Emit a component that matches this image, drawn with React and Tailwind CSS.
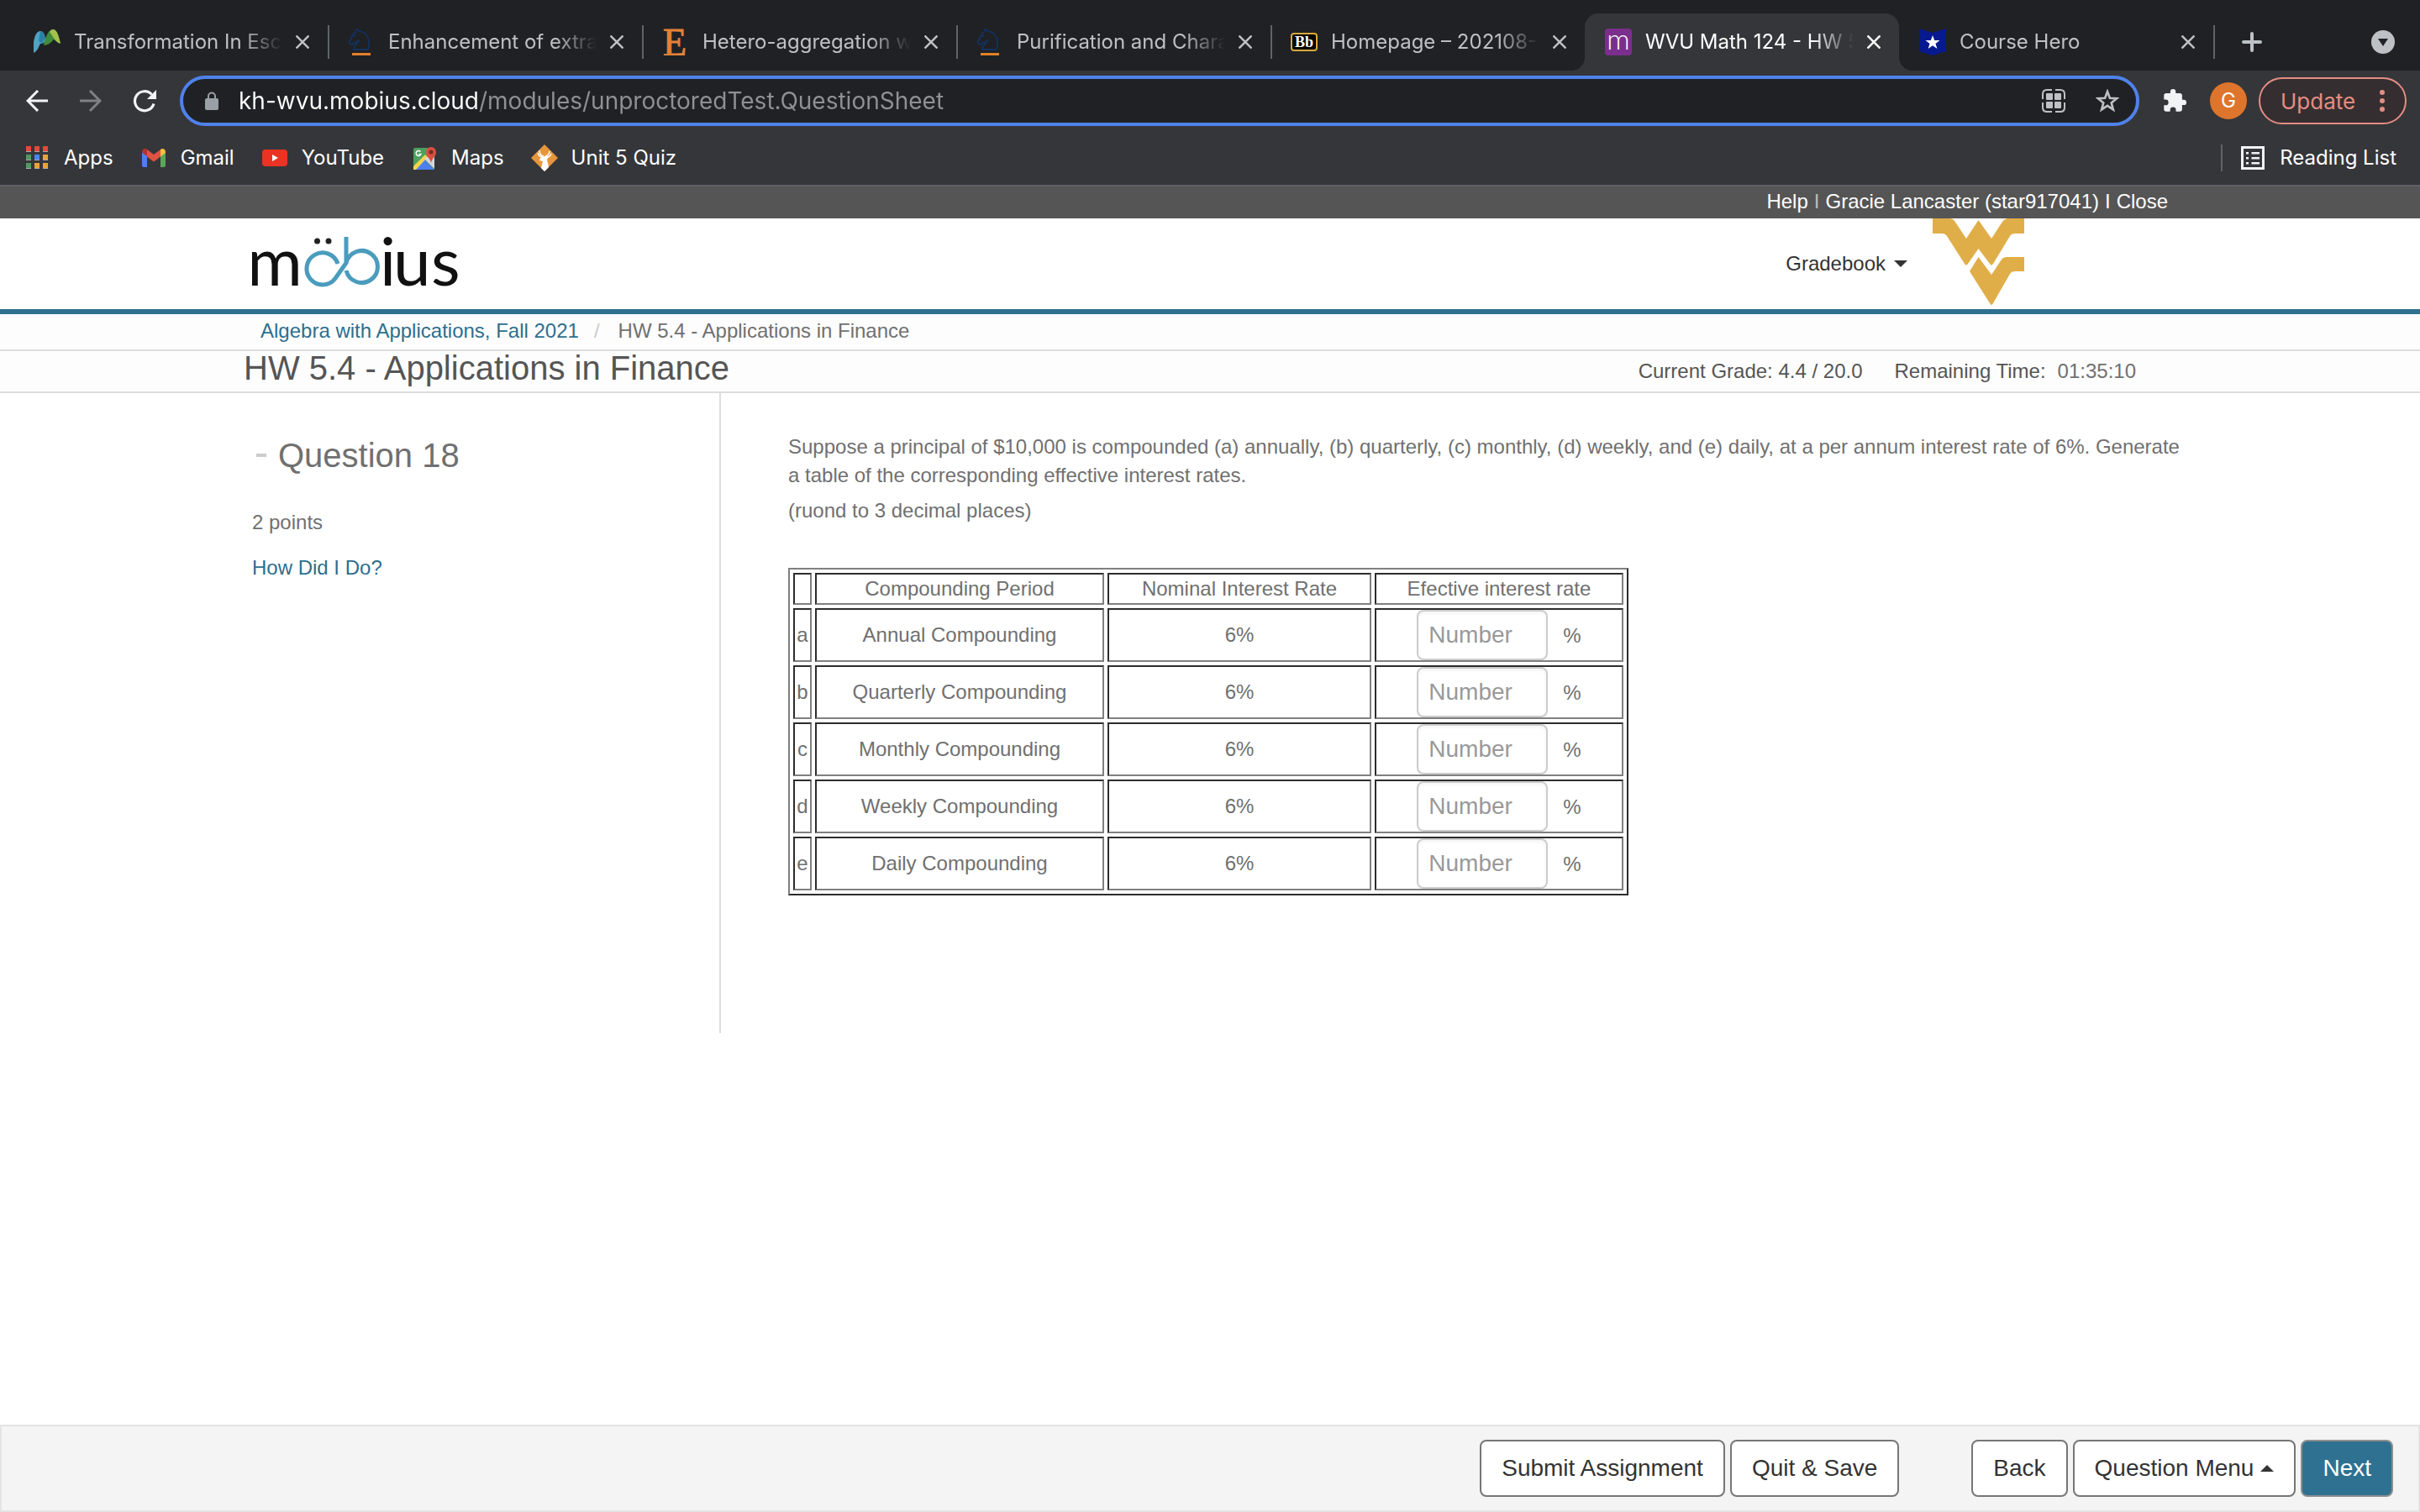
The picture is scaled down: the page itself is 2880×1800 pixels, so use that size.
import { useState } from "react";

const tabs = [
  { title: "Transformation In Esch", icon: MatlabIcon },
  { title: "Enhancement of extra", icon: KnightIcon },
  { title: "Hetero-aggregation w", icon: ElsevierIcon },
  { title: "Purification and Chara", icon: KnightIcon },
  { title: "Homepage – 202108-", icon: BlackboardIcon },
  { title: "WVU Math 124 - HW 5", icon: MobiusIcon, active: true },
  { title: "Course Hero", icon: CourseHeroIcon },
];

const bookmarks = [
  { label: "Apps", icon: AppsIcon },
  { label: "Gmail", icon: GmailIcon },
  { label: "YouTube", icon: YouTubeIcon },
  { label: "Maps", icon: MapsIcon },
  { label: "Unit 5 Quiz", icon: DeerIcon },
];

const rows = [
  { id: "a", period: "Annual Compounding" },
  { id: "b", period: "Quarterly Compounding" },
  { id: "c", period: "Monthly Compounding" },
  { id: "d", period: "Weekly Compounding" },
  { id: "e", period: "Daily Compounding" },
];

/* ── TAB ICONS ── */

function MatlabIcon() {
  return (
    <svg viewBox="0 0 32 32" className="size-8 shrink-0">
      <path d="M0 29V17C1 8 4 3 8 3c4 0 5 5 7 11-3 4-5 4-7 4-2 3-3 9-8 11Z" fill="#4fa3c4" />
      <path d="M8 3c4 0 5 4 6 8l-4 7-4-3Z" fill="#2c7fa5" />
      <path d="M12 20C14 9 18 1 23 1c5 0 7 8 9 17-4-1-6-4-8-5-2 1-3 6-12 7Z" fill="#3f8b3c" />
      <path d="M19 4c1-2 3-3 4-3 5 0 7 8 9 17-6-2-8-7-13-14Z" fill="#a4c04c" />
    </svg>
  );
}

function KnightIcon() {
  return (
    <svg viewBox="0 0 32 32" className="size-8 shrink-0" fill="none">
      <path
        d="M7 25c0-6 6-7 6-11-3 2-4 4-6 3-1 2-3 3-4 1-2-1-2-3 0-4L6 7l3-3 2-4 2 3c8 1 13 7 12 18l-1 4ZM6 8l3 1"
        stroke="#14305c"
        strokeWidth="2"
      />
      <rect x="5" y="29" width="22" height="3" fill="#e0812c" />
    </svg>
  );
}

function ElsevierIcon() {
  return (
    <svg viewBox="0 0 32 32" className="size-8 shrink-0">
      <text x="1" y="32" fontSize="46" fill="#e0823a" stroke="#e0823a" fontFamily="Liberation Serif, serif">
        E
      </text>
    </svg>
  );
}

function BlackboardIcon() {
  return (
    <span className="flex h-[22px] w-8 shrink-0 items-center justify-center rounded-sm border-2 border-[#d9a93c] bg-black font-['Liberation_Serif',serif] text-[18px] leading-none font-bold text-white">
      Bb
    </span>
  );
}

function MobiusIcon() {
  return (
    <span className="flex size-8 shrink-0 items-center justify-center rounded-sm bg-[#7b2f8c] pb-2 font-[Lato,sans-serif] text-[34px] leading-none font-light text-white">
      m
    </span>
  );
}

function CourseHeroIcon() {
  return (
    <svg viewBox="0 0 32 32" className="size-8 shrink-0">
      <path d="M0 0l16 5L32 0v27l-16 5L0 27Z" fill="#07198f" />
      <path d="M16 8l2.200 6h6.300l-5 3.900 1.900 6.100-5.400-3.700-5.400 3.700 1.900-6.100-5-3.900h6.300Z" fill="#fff" />
    </svg>
  );
}

/* ── BOOKMARK ICONS ── */

function AppsIcon() {
  const colors = ["#e5493a", "#e5493a", "#e5493a", "#4f9c5c", "#4587f0", "#e8a534", "#4f9c5c", "#e8a534", "#e8a534"];
  return (
    <svg viewBox="0 0 32 32" className="size-8">
      {colors.map((c, i) => (
        <g key={i}>
          <rect x={3 + (i % 3) * 10} y={2 + Math.floor(i / 3) * 10} width="6" height="7" fill="#a9a9a9" />
          <rect x={3 + (i % 3) * 10} y={2 + Math.floor(i / 3) * 10} width="6" height="6" fill={c} />
        </g>
      ))}
    </svg>
  );
}

function GmailIcon() {
  return (
    <svg viewBox="0 0 32 32" className="size-8">
      <path d="M2 9v16q0 2 2 2h4V13Z" fill="#4d80ee" />
      <path d="M24 13v14h4q2 0 2-2V9Z" fill="#5aa758" />
      <path d="M2 9c0-4 4-5 6-3v8l-6-4.500Z" fill="#b5342b" />
      <path d="M8 6l8 6 8-6v8.500l-8 6-8-6Z" fill="#e05343" />
      <path d="M24 6c2-2 6-1 6 3v1l-6 4.500Z" fill="#f2be42" />
    </svg>
  );
}

function YouTubeIcon() {
  return (
    <svg viewBox="0 0 32 32" className="size-8">
      <rect x="1" y="6" width="30" height="20" rx="4" fill="#ea3323" />
      <path d="M13 12v8l7-4Z" fill="#fff" />
    </svg>
  );
}

function MapsIcon() {
  return (
    <svg viewBox="0 0 32 32" className="size-8">
      <rect x="3" y="4" width="25" height="26" rx="2" fill="#4f9f5e" />
      <path d="M4 30L16 18l12 12Z" fill="#4d80ee" />
      <path d="M3 26v4h3L20 15l-3-3Z" fill="#f5d44c" />
      <path d="M28 10v19L16 17Z" fill="#d6d8dc" />
      <path d="M24 23c0-6-6-8-6-14a6 6 0 0 1 12 0c0 6-6 8-6 14Z" fill="#d95040" />
      <circle cx="24" cy="9" r="2.500" fill="#7c2a21" />
      <path d="M11.500 8.500a3 3 0 1 0 .5 3H9.500" fill="none" stroke="#fff" strokeWidth="1.500" />
    </svg>
  );
}

function DeerIcon() {
  return (
    <svg viewBox="0 0 32 32" className="size-8">
      <path d="M16 0l16 16-16 16L0 16Z" fill="#e8963c" />
      <path
        d="M10 7c0 4 1 6 5 7M8 10c1 3 3 5 6 5M22 8c0 3-2 5-5 6M24 11c-1 3-3 4-6 4"
        fill="none"
        stroke="#fff"
        strokeWidth="1.500"
      />
      <path d="M11 16l5-2 5 1-2 3 2 9-5 5-4-4 2-8-4-1Z" fill="#fff" />
    </svg>
  );
}

/* ── SITE LOGOS ── */

function MobiusLogo() {
  return (
    <svg viewBox="0 0 248 64" className="h-16 w-[248px]" role="img" aria-label="möbius">
      <g fill="#111" fontFamily="Lato, sans-serif" fontSize="80">
        <text x="-6" y="60">m</text>
        <text x="152" y="60">i</text>
        <text x="168" y="60">u</text>
        <text x="213" y="60">s</text>
      </g>
      <circle cx="77.500" cy="7" r="3.500" fill="#222" />
      <circle cx="91" cy="7" r="3.500" fill="#222" />
      <path
        d="M112 2V33L99 51.500A19 19 0 1 1 102 34M112 33A19 19 0 1 1 112 42"
        fill="none"
        stroke="#4a9cbd"
        strokeWidth="5"
      />
    </svg>
  );
}

function WvuLogo() {
  return (
    <svg viewBox="0 0 109 104" className="h-[104px] w-[109px]" fill="#e0ae48" role="img" aria-label="WVU">
      <path d="M0 0H20Q24 0 26 3L40 24 54.500 2 70 24 83 4Q86 0 90 0H109V18H98Q94 18 92 21L72 54Q70 57 68 54L54.500 36 42 54Q40 57 38 54L17 21Q15 18 11 18H0Z" />
      <path d="M54.500 46L70 67 82 49Q84 46 88 46H109V63H98Q94 63 92 66L72 101Q70 105 68 101L44 63Z" />
    </svg>
  );
}

/* ── BROWSER ── */

function Tab({ tab }) {
  const Icon = tab.icon;
  return (
    <div
      className={`relative flex h-[68px] w-[374px] shrink items-center pr-[22px] pl-6 ${
        tab.active ? "z-10 rounded-t-2xl bg-[#35363a] text-white" : "text-[#bdc1c6]"
      }`}
    >
      {tab.active && (
        <>
          <span className="absolute bottom-0 -left-4 size-4 bg-[radial-gradient(circle_at_0_0,#202124_16px,#35363a_16px)]" />
          <span className="absolute -right-4 bottom-0 size-4 bg-[radial-gradient(circle_at_100%_0,#202124_16px,#35363a_16px)]" />
        </>
      )}
      <Icon />
      <span className="ml-4 min-w-0 flex-1 overflow-hidden whitespace-nowrap mask-r-from-80% mask-r-to-100%">
        {tab.title}
      </span>
      <button aria-label="Close tab" className="ml-4 shrink-0">
        <svg viewBox="0 0 16 16" className="size-4" stroke="currentColor" strokeWidth="2.500">
          <path d="M0.500 0.500l15 15M15.500 0.500l-15 15" />
        </svg>
      </button>
    </div>
  );
}

function TabStrip() {
  return (
    <div className="flex h-[84px] items-end bg-[#202124] pl-4 text-[24px]">
      {tabs.map((t, i) => (
        <div key={t.title} className="relative flex min-w-0 items-center">
          <Tab tab={t} />
          {i !== 4 && i !== 5 && <span className="absolute -right-[2px] h-10 w-[2px] bg-[#5f6368]" />}
        </div>
      ))}
      <button aria-label="New tab" className="mb-[22px] ml-[34px] text-[#bdc1c6]">
        <svg viewBox="0 0 24 24" className="size-6" stroke="currentColor" strokeWidth="4" strokeLinecap="round">
          <path d="M12 2v20M2 12h20" />
        </svg>
      </button>
      <button aria-label="Search tabs" className="mr-[30px] mb-5 ml-auto">
        <svg viewBox="0 0 28 28" className="size-7">
          <circle cx="14" cy="14" r="14" fill="#bdc1c6" />
          <path d="M8 10h12l-6 9Z" fill="#202124" />
        </svg>
      </button>
    </div>
  );
}

function Toolbar() {
  const [url, setUrl] = useState("kh-wvu.mobius.cloud/modules/unproctoredTest.QuestionSheet");

  return (
    <div className="flex h-[72px] items-center bg-[#35363a] pr-4 pl-3">
      <button aria-label="Back" className="flex w-16 justify-center text-[#f1f3f4]">
        <svg viewBox="0 0 26 26" className="size-[26px]" fill="none" stroke="currentColor" strokeWidth="3">
          <path d="M26 13H2M14 1L2 13l12 12" />
        </svg>
      </button>
      <button aria-label="Forward" className="flex w-16 justify-center text-[#7f8082]">
        <svg viewBox="0 0 26 26" className="size-[26px]" fill="none" stroke="currentColor" strokeWidth="3">
          <path d="M0 13h24M12 1l12 12-12 12" />
        </svg>
      </button>
      <button aria-label="Reload" className="flex w-16 justify-center text-[#f1f3f4]">
        <svg viewBox="0 0 28 28" className="size-7">
          <path d="M25 17.500A11.500 11.500 0 1 1 22.500 6.500" fill="none" stroke="currentColor" strokeWidth="3.200" />
          <path d="M28 1v11H17Z" fill="currentColor" />
        </svg>
      </button>

      <div className="ml-[10px] flex h-[60px] flex-1 items-center rounded-full border-4 border-[#4f82ea] bg-[#202124] pr-5 pl-[26px]">
        <svg viewBox="0 0 16 22" className="h-[22px] w-4 shrink-0" fill="#9aa0a6">
          <rect y="8" width="16" height="14" rx="2" />
          <path d="M4 9V5.500a4 4 0 0 1 8 0V9" fill="none" stroke="#9aa0a6" strokeWidth="2" />
        </svg>
        <input
          aria-label="Address"
          value={url}
          onChange={(e) => setUrl(e.target.value)}
          className="ml-6 min-w-0 flex-1 bg-linear-to-r from-white from-[286px] to-[#8f9194] to-[286px] bg-clip-text text-[28px] text-transparent caret-white outline-none"
        />
        <button aria-label="Show QR code" className="mx-[18px] text-[#bdc1c6]">
          <svg viewBox="0 0 28 28" className="size-7" fill="currentColor">
            <path d="M12 1H6Q1 1 1 6v6M16 1h6q5 0 5 5v6M12 27H6q-5 0-5-5v-6M16 27h6q5 0 5-5v-6" fill="none" stroke="currentColor" strokeWidth="2" />
            <rect x="5" y="5" width="8" height="8" rx="1" />
            <rect x="15" y="5" width="8" height="8" rx="1" />
            <rect x="5" y="15" width="8" height="8" rx="1" />
            <rect x="15" y="15" width="8" height="8" rx="1" />
          </svg>
        </button>
        <button aria-label="Bookmark this tab" className="ml-[18px] text-[#bdc1c6]">
          <svg viewBox="0 0 28 28" className="size-7" fill="none" stroke="currentColor" strokeWidth="2.600">
            <path d="M14 3l2.900 7.700 8.200.5-6.400 5.200 2.200 8L14 19.800l-6.900 4.600 2.200-8-6.400-5.200 8.200-.5Z" />
          </svg>
        </button>
      </div>

      <button aria-label="Extensions" className="ml-7 text-[#f1f3f4]">
        <svg viewBox="1 1 22 22" className="size-7" fill="currentColor">
          <path d="M20.500 11H19V7c0-1.100-.9-2-2-2h-4V3.500a2.500 2.500 0 0 0-5 0V5H4c-1.100 0-2 .9-2 2v3.800h1.500a2.700 2.700 0 0 1 0 5.400H2V20c0 1.100.9 2 2 2h3.800v-1.500a2.700 2.700 0 0 1 5.400 0V22H17c1.100 0 2-.9 2-2v-4h1.500a2.500 2.500 0 0 0 0-5Z" />
        </svg>
      </button>
      <button aria-label="Profile" className="ml-7 size-11 rounded-full bg-[#de752c] text-[24px] text-white">
        G
      </button>
      <button className="ml-[14px] flex h-14 w-44 items-center justify-between rounded-full border-2 border-[#e48d84] bg-[#352e30] pr-6 pl-6 text-[26px] text-[#e48d84]">
        Update
        <svg viewBox="0 0 6 28" className="h-7 w-[6px]" fill="currentColor">
          <circle cx="3" cy="4" r="3" />
          <circle cx="3" cy="14" r="3" />
          <circle cx="3" cy="24" r="3" />
        </svg>
      </button>
    </div>
  );
}

function BookmarkBar() {
  return (
    <div className="flex h-[66px] items-center gap-8 border-b-2 border-[#5f6067] bg-[#35363a] pr-7 pl-7 text-[24px] text-white">
      {bookmarks.map(({ label, icon: Icon }) => (
        <a key={label} href="#" className="flex items-center gap-4">
          <Icon />
          {label}
        </a>
      ))}
      <div className="ml-auto flex items-center">
        <span className="mr-[22px] h-8 w-[2px] bg-[#5f6368]" />
        <button className="flex items-center gap-[18px]">
          <svg viewBox="0 0 28 28" className="size-7" fill="#f1f3f4">
            <rect x="1.500" y="1.500" width="25" height="25" fill="none" stroke="#f1f3f4" strokeWidth="3" />
            <path d="M6 7h3v2.500H6ZM6 13h3v2.500H6ZM6 19h3v2.500H6ZM12.500 7H22v2.500h-9.500ZM12.500 13H22v2.500h-9.500ZM12.500 19H22v2.500h-9.500Z" />
          </svg>
          Reading List
        </button>
      </div>
    </div>
  );
}

/* ── PAGE ── */

function SiteHeader() {
  return (
    <header>
      <div className="bg-[#555] text-white">
        <div className="mx-[10%] flex h-[38px] items-center justify-end gap-[7px] pr-3 pb-[2px]">
          <a href="#">Help</a>
          <span className="text-[#bbb]">I</span>
          <a href="#">Gracie Lancaster (star917041)</a>
          <span>I</span>
          <a href="#">Close</a>
        </div>
      </div>
      <div className="border-b-[6px] border-[#2f7190]">
        <div className="mx-[10%] flex h-[108px] items-start justify-between pr-[183px] pl-3">
          <a href="#" className="mt-5">
            <MobiusLogo />
          </a>
          <div className="flex items-start">
            <button className="mt-9 mr-[30px] flex items-center gap-[10px] text-[#333]">
              Gradebook
              <span className="border-x-8 border-t-8 border-x-transparent border-t-[#333]" />
            </button>
            <WvuLogo />
          </div>
        </div>
      </div>

      <nav className="border-b-2 border-[#ddd] bg-[#fdfdfd]">
        <div className="mx-[10%] flex h-[42px] items-center pb-[2px] pl-[22px]">
          <a href="#" className="text-[#2d6f8e]">Algebra with Applications, Fall 2021</a>
          <span className="mr-[22px] ml-[18px] text-[#ccc]">/</span>
          <span className="text-[#707070]">HW 5.4 - Applications in Finance</span>
        </div>
      </nav>

      <div className="border-b-2 border-[#ddd] bg-[#fdfdfd] text-[#555]">
        <div className="mx-[10%] flex h-12 items-center justify-between pr-[50px]">
          <h1 className="pb-2 pl-[2px] text-[40px] leading-10">HW 5.4 - Applications in Finance</h1>
          <div className="flex">
            <span>Current Grade: 4.4 / 20.0</span>
            <span className="ml-[38px]">Remaining Time:</span>
            <span className="ml-[14px] text-[#707070]">01:35:10</span>
          </div>
        </div>
      </div>
    </header>
  );
}

function RateTable() {
  const [answers, setAnswers] = useState({});
  const cell = "border-2 border-t-[#2c2c2c] border-r-[#808080] border-b-[#808080] border-l-[#2c2c2c] p-0 font-normal";

  return (
    <table className="border-separate border-spacing-1 border-2 border-t-[#808080] border-r-[#2c2c2c] border-b-[#2c2c2c] border-l-[#808080] text-center leading-[34px]">
      <thead>
        <tr>
          <td className={`${cell} w-[22px]`} />
          <th className={`${cell} w-[344px]`}>Compounding Period</th>
          <th className={`${cell} w-[314px]`}>Nominal Interest Rate</th>
          <th className={`${cell} w-[296px]`}>Efective interest rate</th>
        </tr>
      </thead>
      <tbody>
        {rows.map((r) => (
          <tr key={r.id}>
            <td className={cell}>{r.id}</td>
            <td className={cell}>{r.period}</td>
            <td className={cell}>6%</td>
            <td className={cell}>
              <div className="flex items-baseline justify-center gap-[18px]">
                <input
                  aria-label={r.period}
                  placeholder="Number"
                  value={answers[r.id] || ""}
                  onChange={(e) => setAnswers({ ...answers, [r.id]: e.target.value })}
                  className="h-[60px] w-[156px] rounded-lg border-2 border-[#ccc] px-3 text-[28px] inset-shadow-sm placeholder:text-[#999]"
                />
                <span>%</span>
              </div>
            </td>
          </tr>
        ))}
      </tbody>
    </table>
  );
}

function Question() {
  return (
    <main className="mx-[10%] flex min-h-[762px] flex-1 items-start text-[#707070]">
      <aside className="min-h-[762px] w-[570px] shrink-0 border-r-2 border-[#ddd] pl-3">
        <h2 className="flex items-center pt-[50px] text-[40px] leading-[48px]">
          <span className="mr-[14px] ml-[5px] h-1 w-3 bg-[#ccc]" />
          Question 18
        </h2>
        <p className="mt-[39px] leading-[34px]">2 points</p>
        <a href="#" className="mt-5 block leading-[34px] text-[#2d6f8e]">How Did I Do?</a>
      </aside>
      <section className="-mr-4 min-w-0 flex-1 pt-[47px] pl-20 leading-[34px]">
        <p>
          Suppose a principal of $10,000 is compounded (a) annually, (b) quarterly, (c) monthly, (d) weekly, and (e)
          daily, at a per annum interest rate of 6%. Generate a table of the corresponding effective interest rates.
        </p>
        <p className="mt-2 mb-[51px]">(ruond to 3 decimal places)</p>
        <RateTable />
      </section>
    </main>
  );
}

function FooterButton({ primary, className = "", children }) {
  return (
    <button
      className={`flex h-[68px] items-center rounded-lg border-2 px-6 text-[28px] ${
        primary ? "border-[#8f8f8f] bg-[#2f7190] text-white" : "border-[#767676] bg-white text-[#333]"
      } ${className}`}
    >
      {children}
    </button>
  );
}

function Footer() {
  return (
    <footer className="flex h-[104px] items-center justify-end gap-[6px] border-2 border-[#e4e4e4] bg-[#f4f4f4] pr-[30px]">
      <FooterButton>Submit Assignment</FooterButton>
      <FooterButton className="mr-20">Quit &amp; Save</FooterButton>
      <FooterButton>Back</FooterButton>
      <FooterButton>
        Question Menu
        <span className="ml-2 border-x-8 border-b-8 border-x-transparent border-b-[#333]" />
      </FooterButton>
      <FooterButton primary>Next</FooterButton>
    </footer>
  );
}

export default function App() {
  return (
    <div className="flex min-h-screen flex-col bg-white font-['Liberation_Sans',Arial,sans-serif] text-[24px]">
      <div className="font-[Inter,sans-serif]">
        <TabStrip />
        <Toolbar />
        <BookmarkBar />
      </div>
      <SiteHeader />
      <Question />
      <Footer />
    </div>
  );
}
